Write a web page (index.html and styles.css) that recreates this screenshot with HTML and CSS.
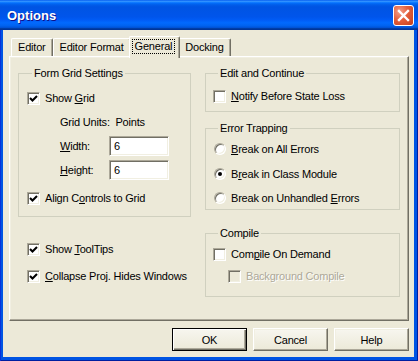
FILE: index.html
```html
<!DOCTYPE html>
<html>
<head>
<meta charset="utf-8">
<title>Options</title>
<link rel="stylesheet" href="styles.css">
</head>
<body>
<div class="window">
  <div class="titlebar">
    <span class="title">Options</span>
    <button class="close" aria-label="Close">
      <svg width="21" height="21" viewBox="0 0 21 21"><path d="M6 6 L15 15 M15 6 L6 15" stroke="#fff" stroke-width="2.4" stroke-linecap="square" fill="none"/></svg>
    </button>
  </div>
  <div class="client">
    <div class="tabs">
      <div class="tab">Editor</div>
      <div class="tab">Editor Format</div>
      <div class="tab active"><span class="focus">General</span></div>
      <div class="tab">Docking</div>
    </div>
    <div class="panel">
      <div class="col">
        <fieldset class="group grid-group">
          <legend>Form Grid Settings</legend>
          <div class="row"><span class="box"><svg width="9" height="9" viewBox="0 0 9 9"><path d="M1 4 L3.5 6.5 L8 2" stroke="#000" stroke-width="2.1" fill="none"/></svg></span><span>Show <u>G</u>rid</span></div>
          <div class="row units">Grid Units:&nbsp; Points</div>
          <div class="field"><span class="lbl"><u>W</u>idth:</span><input class="input" type="text" value="6"></div>
          <div class="field"><span class="lbl"><u>H</u>eight:</span><input class="input" type="text" value="6"></div>
          <div class="row align"><span class="box"><svg width="9" height="9" viewBox="0 0 9 9"><path d="M1 4 L3.5 6.5 L8 2" stroke="#000" stroke-width="2.1" fill="none"/></svg></span><span>Align C<u>o</u>ntrols to Grid</span></div>
        </fieldset>
        <div class="loose">
          <div class="row"><span class="box"><svg width="9" height="9" viewBox="0 0 9 9"><path d="M1 4 L3.5 6.5 L8 2" stroke="#000" stroke-width="2.1" fill="none"/></svg></span><span>Show <u>T</u>oolTips</span></div>
          <div class="row collapse"><span class="box"><svg width="9" height="9" viewBox="0 0 9 9"><path d="M1 4 L3.5 6.5 L8 2" stroke="#000" stroke-width="2.1" fill="none"/></svg></span><span><u>C</u>ollapse Proj. Hides Windows</span></div>
        </div>
      </div>
      <div class="col">
        <fieldset class="group edit-group">
          <legend>Edit and Continue</legend>
          <div class="row"><span class="box"></span><span><u>N</u>otify Before State Loss</span></div>
        </fieldset>
        <fieldset class="group error-group">
          <legend>Error Trapping</legend>
          <div class="row"><span class="radio"></span><span><u>B</u>reak on All Errors</span></div>
          <div class="row r2"><span class="radio on"></span><span>B<u>r</u>eak in Class Module</span></div>
          <div class="row r3"><span class="radio"></span><span>Break on Unhandled <u>E</u>rrors</span></div>
        </fieldset>
        <fieldset class="group compile-group">
          <legend>Compile</legend>
          <div class="row"><span class="box"></span><span>Com<u>p</u>ile On Demand</span></div>
          <div class="row sub disabled"><span class="box"></span><span>Back<u>g</u>round Compile</span></div>
        </fieldset>
      </div>
    </div>
    <div class="buttons">
      <button class="btn default">OK</button>
      <button class="btn">Cancel</button>
      <button class="btn">Help</button>
    </div>
  </div>
</div>
</body>
</html>
```
FILE: styles.css
```css
html, body {
  margin: 0;
  padding: 0;
  background: #ece9d8;
}
body {
  font-family: "Liberation Sans", Arial, sans-serif;
  font-size: 11px;
  letter-spacing: -0.2px;
  color: #000;
}
.window {
  width: 418px;
  height: 361px;
  box-sizing: border-box;
  display: flex;
  flex-direction: column;
  background: #0054e3;
  box-shadow: inset 1px 0 #0831d9, inset -1px 0 #001ea0, inset 0 -1px #001ea0;
}
.titlebar {
  height: 30px;
  flex: none;
  display: flex;
  align-items: center;
  justify-content: space-between;
  padding: 0 4px 0 7px;
  background: linear-gradient(to bottom, #0058ee 0%, #3593ff 4%, #288eff 6%, #127dff 8%, #036ffc 10%, #0262ee 14%, #0057e5 20%, #0054e3 24%, #0055eb 56%, #005bf5 66%, #026afe 76%, #0062ef 86%, #0052d6 92%, #0040ab 94%, #003092 100%);
}
.title {
  color: #fff;
  font-family: "Liberation Sans", Arial, sans-serif;
  font-weight: bold;
  font-size: 13px;
  letter-spacing: 0;
  text-shadow: 1px 1px #0f1089;
}
.close {
  width: 21px;
  height: 21px;
  padding: 0;
  margin: 0;
  border: 1px solid #fff;
  border-radius: 3px;
  box-sizing: border-box;
  display: flex;
  align-items: center;
  justify-content: center;
  background: radial-gradient(circle at 30% 30%, #f3a08a 0%, #e35f3c 45%, #c43f1b 100%);
}
.close svg {
  display: block;
  margin: -1px;
}
.client {
  flex: 1;
  margin: 0 4px 4px 3px;
  background: #ece9d8;
  display: flex;
  flex-direction: column;
  padding: 0 5px 6px 6px;
}
.tabs {
  height: 26px;
  flex: none;
  display: flex;
  align-items: flex-end;
  padding-left: 2px;
}
.tab {
  height: 18px;
  box-sizing: border-box;
  padding: 0 6px;
  line-height: 16px;
  border-top: 1px solid #fff;
  border-left: 1px solid #fff;
  border-right: 1px solid #716f64;
  box-shadow: inset -1px 0 #aca899;
  border-radius: 2px 2px 0 0;
  background: #ece9d8;
  white-space: nowrap;
}
.tab.active {
  height: 22px;
  margin: 0 -2px -2px;
  padding: 0 5px 0 3px;
  position: relative;
  z-index: 1;
  line-height: 18px;
}
.focus {
  display: inline-block;
  padding: 0 2px;
  line-height: 13px;
  outline: 1px dotted #000;
  outline-offset: 0;
  margin-top: 3px;
}
.panel {
  flex: 1;
  border: 1px solid;
  border-color: #fff #716f64 #716f64 #fff;
  box-shadow: inset -1px -1px #aca899, inset 1px 1px #f1efe2;
  display: grid;
  grid-template-columns: 173px 195px;
  column-gap: 14px;
  align-items: start;
  padding: 9px 0 0 8px;
}
.group {
  margin: 0;
  border: 1px solid #d0d0bf;
  min-width: 0;
}
.group legend {
  padding: 0 2px;
  margin-left: 5px;
  line-height: 14px;
}
.row {
  height: 16px;
  display: flex;
  align-items: center;
  gap: 5px;
  white-space: nowrap;
}
.box {
  width: 13px;
  height: 13px;
  flex: none;
  box-sizing: border-box;
  background: #fff;
  border: 1px solid;
  border-color: #aca899 #fff #fff #aca899;
  box-shadow: inset 1px 1px #716f64, inset -1px -1px #f1efe2;
}
.box svg {
  display: block;
  margin: 1px;
}
.radio {
  width: 12px;
  height: 12px;
  flex: none;
  margin: 0 0 0 1px;
  box-sizing: border-box;
  border-radius: 50%;
  background: #fff;
  border: 1px solid;
  border-color: #aca899 #fff #fff #aca899;
  box-shadow: inset 1px 1px #716f64, inset -1px -1px #f1efe2;
  display: flex;
  align-items: center;
  justify-content: center;
}
.radio.on::after {
  content: "";
  width: 4px;
  height: 4px;
  border-radius: 50%;
  background: #000;
}
.grid-group {
  padding: 10px 8px 10px;
}
.units {
  margin-top: 8px;
  padding-left: 33px;
}
.field {
  margin-top: 6px;
  height: 20px;
  display: flex;
  align-items: center;
  padding-left: 33px;
}
.field + .field {
  margin-top: 4px;
}
.lbl {
  width: 49px;
}
.input {
  width: 60px;
  height: 20px;
  box-sizing: border-box;
  margin: 0;
  padding: 0 0 0 4px;
  font: inherit;
  letter-spacing: inherit;
  background: #fff;
  border: 1px solid;
  border-color: #aca899 #fff #fff #aca899;
  box-shadow: inset 1px 1px #716f64, inset -1px -1px #f1efe2;
  outline: none;
}
.align {
  margin-top: 10px;
}
.loose {
  margin-top: 24px;
  padding-left: 9px;
}
.collapse {
  margin-top: 11px;
}
.edit-group {
  padding: 8px 7px 7px;
}
.error-group {
  margin-top: 9px;
  padding: 6px 7px 3px;
}
.r2 {
  margin-top: 9px;
}
.r3 {
  margin-top: 8px;
}
.compile-group {
  margin-top: 16px;
  padding: 6px 7px 12px;
}
.sub {
  margin-top: 6px;
  padding-left: 15px;
}
.disabled {
  color: #aca899;
  text-shadow: 1px 1px #fff;
}
.disabled .box {
  background: #ece9d8;
}
.buttons {
  flex: none;
  margin-top: 7px;
  display: flex;
  justify-content: flex-end;
  gap: 6px;
}
.btn {
  width: 75px;
  height: 23px;
  margin: 0;
  padding: 0;
  font: inherit;
  letter-spacing: inherit;
  color: #000;
  background: linear-gradient(#f7f6ef, #ece9d8);
  border: 1px solid;
  border-color: #fff #716f64 #716f64 #fff;
  box-shadow: inset -1px -1px #aca899, inset 1px 1px #f1efe2;
}
.btn.default {
  border-color: #000;
  box-shadow: inset 1px 1px #fff, inset -1px -1px #716f64, inset -2px -2px #aca899;
}
```
